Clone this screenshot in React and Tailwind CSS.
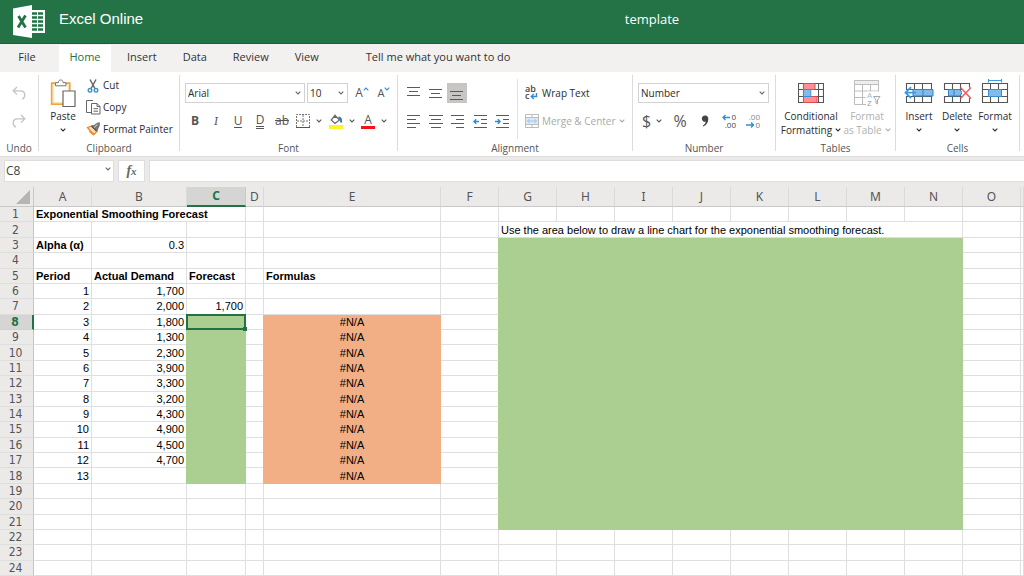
import React, { useState } from "react";

const columns = [
  { name: "A", width: "w-[58px]" },
  { name: "B", width: "w-[95px]" },
  { name: "C", width: "w-[59px]" },
  { name: "D", width: "w-[18px]" },
  { name: "E", width: "w-[177px]" },
  { name: "F", width: "w-[58px]" },
  { name: "G", width: "w-[58px]" },
  { name: "H", width: "w-[58px]" },
  { name: "I", width: "w-[58px]" },
  { name: "J", width: "w-[58px]" },
  { name: "K", width: "w-[58px]" },
  { name: "L", width: "w-[58px]" },
  { name: "M", width: "w-[58px]" },
  { name: "N", width: "w-[58px]" },
  { name: "O", width: "w-[58px]" },
  { name: "", width: "" },
];

const demand = [
  "1,700",
  "2,000",
  "1,800",
  "1,300",
  "2,300",
  "3,900",
  "3,300",
  "3,200",
  "4,300",
  "4,900",
  "4,500",
  "4,700",
  "",
];

// every cell that is not plain and empty
const cells = {
  A1: { text: "Exponential Smoothing Forecast", bold: true, colSpan: 3 },
  G2: {
    text: "Use the area below to draw a line chart for the exponential smoothing forecast.",
    colSpan: 8,
  },
  A3: { text: "Alpha (α)", bold: true },
  B3: { text: "0.3", align: "right" },
  G3: { fill: "green", colSpan: 8, rowSpan: 19 },
  A5: { text: "Period", bold: true },
  B5: { text: "Actual Demand", bold: true },
  C5: { text: "Forecast", bold: true },
  E5: { text: "Formulas", bold: true },
  C7: { text: "1,700", align: "right" },
};
demand.forEach((value, i) => {
  cells["A" + (i + 6)] = { text: String(i + 1), align: "right" };
  cells["B" + (i + 6)] = { text: value, align: "right" };
});
for (let row = 8; row <= 18; row++) {
  cells["C" + row] = { fill: "green" };
  cells["E" + row] = { text: "#N/A", align: "center", fill: "orange" };
}
for (let row = 3; row <= 21; row++) {
  cells["F" + row] = { greenEdge: true };
}

const fills = {
  green: "bg-[#abcf91] border-[#abcf91] shadow-[-1px_0_0_#abcf91]",
  orange: "bg-[#f2af86] border-[#f2af86] shadow-[-1px_0_0_#f2af86]",
};

const aligns = {
  right: "text-right",
  center: "text-center",
};

// cells swallowed by a colSpan or rowSpan, col counts from 0
const isCovered = (col, row) => {
  if (row === 1) return col === 1 || col === 2;
  if (row === 2 || row === 3) return col > 6 && col < 14;
  return row > 3 && row < 22 && col > 5 && col < 14;
};

const Chevron = ({ className = "" }) => (
  <svg
    viewBox="0 0 6 4"
    className={`w-[6px] h-[4px] shrink-0 ${className}`}
    fill="none"
    stroke="currentColor"
    strokeWidth="1.1"
  >
    <path d="M0.7 0.7 L3 2.9 L5.3 0.7" />
  </svg>
);

const ExcelLogo = () => (
  <svg viewBox="0 0 34 34" className="w-[34px] h-[34px] shrink-0">
    <path d="M18 5h15v23H18z" fill="#fff" />
    <path
      d="M20 8.5h5M26 8.5h5M20 12.5h5M26 12.5h5M20 16.5h5M26 16.5h5M20 20.5h5M26 20.5h5M20 24.5h5M26 24.5h5"
      stroke="#217346"
      strokeWidth="2.4"
    />
    <path d="M1 3.5 20 0v33L1 30z" fill="#fff" />
    <path d="M6.5 11l7 11.5M13.5 10.5L6 22.5" stroke="#217346" strokeWidth="2.8" />
  </svg>
);

const UndoIcon = ({ flip }) => (
  <svg
    viewBox="0 0 14 14"
    className={`w-[14px] h-[14px] ${flip ? "-scale-x-100" : ""}`}
    fill="none"
    stroke="#c3c3c3"
    strokeWidth="1.3"
  >
    <path d="M5 1 1.2 4.8 5 8.6M1.2 4.8H8.5C11.5 4.8 12.8 7 12.8 9c0 2-1 3.4-2.6 4.2" />
  </svg>
);

const PasteIcon = () => (
  <svg viewBox="0 0 26 28" className="w-[26px] h-[28px]" fill="none">
    <path d="M1.7 4.2h18v21h-18z" fill="#fff" stroke="#f0a33f" strokeWidth="1.8" />
    <path d="M3.2 5.7h15v18h-15z" stroke="#fbdca0" />
    <path
      d="M5.5 6.8V3.7h2.8C8.3 1.8 9.3 1 10.7 1s2.4.8 2.4 2.7H16v3.1z"
      fill="#fff"
      stroke="#777"
    />
    <path d="M13 12h12v15.5H13z" fill="#fff" stroke="#666" strokeWidth="1.2" />
  </svg>
);

const CutIcon = () => (
  <svg viewBox="0 0 14 14" className="w-[14px] h-[14px]" fill="none">
    <path d="M4 0.5 9.2 10M10 0.5 4.8 10" stroke="#666" strokeWidth="1.5" />
    <circle cx="4" cy="11.3" r="1.8" stroke="#3b93d0" strokeWidth="1.4" />
    <circle cx="10" cy="11.3" r="1.8" stroke="#3b93d0" strokeWidth="1.4" />
  </svg>
);

const CopyIcon = () => (
  <svg viewBox="0 0 15 15" className="w-[15px] h-[15px]" fill="none" stroke="#666">
    <path d="M5 12.5H.5V.5h6.5" />
    <path d="M5.5 3.5h5.5l3 3v7.5H5.5zM11 3.5v3h3" fill="#fff" />
    <path d="M7.5 8.7h4.5M7.5 11.2h4.5" />
  </svg>
);

const PainterIcon = () => (
  <svg viewBox="0 0 15 14" className="w-[15px] h-[14px]" fill="none">
    <path d="M1.5 5.5 7.5 12.8l4-3.8L6 4z" fill="#fbe0b8" stroke="#ed8733" strokeWidth="1.3" />
    <path d="M3.5 9 7.5 12.3" stroke="#ed8733" strokeWidth="1.8" />
    <path d="M5 3.5 8 3l3.5-2.5h2.5l-.2 3L11.5 8.5 10 9z" fill="#777" />
    <path d="M5.5 4 10.5 9" stroke="#555" strokeWidth="1.4" />
    <path d="M8 5.5 11.5 2.5" stroke="#ddd" />
  </svg>
);

// rows of a paragraph, each given as [x1, x2, y]
const LinesIcon = ({ lines, arrow }) => (
  <svg viewBox="0 0 14 14" className="w-[14px] h-[14px]" fill="none">
    {lines.map(([x1, x2, y], i) => (
      <path key={i} d={`M${x1} ${y}.5H${x2}`} stroke="#5a5a5a" />
    ))}
    {arrow === "left" && (
      <path d="M6 7.5H1M3.2 5.3 1 7.5l2.2 2.2" stroke="#2b8fd6" strokeWidth="1.5" />
    )}
    {arrow === "right" && (
      <path d="M0 7.5H5M2.8 5.3 5 7.5 2.8 9.7" stroke="#2b8fd6" strokeWidth="1.5" />
    )}
  </svg>
);

const BordersIcon = () => (
  <svg viewBox="0 0 14 14" className="w-[14px] h-[14px]" fill="none" stroke="#777">
    <path d="M.5 13V.5H13.5V13M7 1v12M1 7h12" strokeDasharray="2 1" />
    <path d="M0 13.5H14" stroke="#555" />
  </svg>
);

const FillIcon = () => (
  <svg viewBox="0 0 14 15" className="w-[14px] h-[15px]" fill="none">
    <path d="M6 1.5 10.5 6 6 9.5 2.2 6zM6 4V0.5" stroke="#666" strokeWidth="1.2" />
    <path d="M9.5 3.5c2 0 3 1.5 2.5 5" stroke="#2b6fb0" strokeWidth="1.8" />
    <path d="M0 11h14v4H0z" fill="#fff22d" />
  </svg>
);

const WrapIcon = () => (
  <svg viewBox="0 0 13 18" className="w-[13px] h-[18px]" fill="none" fontFamily="Open Sans, sans-serif">
    <text x="0" y="8" fontSize="9" fill="#444" fontWeight="600">
      ab
    </text>
    <text x="0" y="15" fontSize="9" fill="#444" fontWeight="600">
      c
    </text>
    <path d="M11.5 9v3.5H6.5M8.8 10 6.3 12.5l2.5 2.5" stroke="#2b8fd6" strokeWidth="1.4" />
  </svg>
);

const MergeIcon = () => (
  <svg viewBox="0 0 14 14" className="w-[14px] h-[14px]" fill="none">
    <path d="M.5 .5h13v13H.5z" stroke="#bbb" />
    <path d="M1 3.5h12M1 10.5h12M7 1v2.5M7 10.5V13" stroke="#bbb" />
    <path d="M1 4h12v6H1z" fill="#dcebf8" />
    <path d="M2.5 7h9M4.5 5 2.5 7l2 2M9.5 5l2 2-2 2" stroke="#9cc4e8" />
  </svg>
);

const DecimalIcon = ({ fewer }) => (
  <svg viewBox="0 0 15 20" className="w-[15px] h-[20px]" fill="none" fontFamily="Open Sans, sans-serif">
    <text x="14" y="9" textAnchor="end" fontSize="8" fill={fewer ? "#888" : "#444"}>
      {fewer ? ".00" : "0"}
    </text>
    <text x="14" y="17" textAnchor="end" fontSize="8" fill={fewer ? "#777" : "#444"}>
      {fewer ? "0" : ".00"}
    </text>
    {fewer ? (
      <path d="M0 14h7.5M5 11.5 7.5 14 5 16.5" stroke="#2b8fd6" strokeWidth="1.3" />
    ) : (
      <path d="M8 6.5H1M3.5 4 1 6.5l2.5 2.5" stroke="#2b8fd6" strokeWidth="1.3" />
    )}
  </svg>
);

const ConditionalIcon = () => (
  <svg viewBox="0 0 26 22" className="w-[26px] h-[22px]" fill="none">
    <path d="M.5 1.5h25v19H.5zM.5 7.5h25M.5 14.5h25M5.5 1.5v19M20.5 1.5v19" stroke="#555" strokeWidth="1.1" />
    <path d="M5.5 1.5H17v6H5.5zM5.5 14.5H19v6H5.5z" fill="#ff8f96" stroke="#e0484d" />
    <path d="M5.5 7.5h7.5v7H5.5z" fill="#80bbec" stroke="#3b8fd0" />
    <path d="M13.5 8h6.5v6h-6.5z" fill="#fff" />
  </svg>
);

const FormatTableIcon = () => (
  <svg viewBox="0 0 28 28" className="w-[28px] h-[28px]" fill="none" stroke="#bdbdbd">
    <path d="M1.5 1.5h24v4h-24z" fill="#eee" />
    <path d="M13 25.5H1.5v-20h24V15M1.5 12h24M1.5 18.5h11M9.5 5.5v20M17.5 5.5V13" />
    <path d="M14 12.5h13v15H14z" fill="#fff" stroke="none" />
    <text x="14" y="19" fontSize="8" fill="#8cc0ea" stroke="none" fontFamily="Open Sans, sans-serif">
      A
    </text>
    <text x="14" y="27" fontSize="8" fill="#999" stroke="none" fontFamily="Open Sans, sans-serif">
      Z
    </text>
    <path d="M20.5 17.5H27l-2.5 3.5v4l-1.5-1v-3z" stroke="#aaa" />
  </svg>
);

const CellsGrid = () => (
  <path
    d="M2.5 1.5h25v19h-25zM2.5 7.5h25M2.5 14.5h25M10.5 1.5v19M18.5 1.5v19"
    stroke="#555"
    strokeWidth="1.1"
  />
);

const InsertIcon = () => (
  <svg viewBox="0 0 30 28" className="w-[30px] h-[28px]" fill="none">
    <g transform="translate(0 3)">
      <CellsGrid />
      <path d="M9 7.5h20v6.5H9zM19 7.5v6.5" fill="#80bbec" stroke="#2b85c8" />
      <path d="M1 8h7v6H1z" fill="#fff" />
      <path d="M12 10.7H1.5M7 5.2 1.5 10.7 7 16.2" stroke="#3b9ae0" strokeWidth="1.8" />
    </g>
  </svg>
);

const DeleteIcon = () => (
  <svg viewBox="0 0 30 28" className="w-[30px] h-[28px]" fill="none">
    <g transform="translate(0 3)">
      <CellsGrid />
      <path d="M2 8h4v6H2z" fill="#fff" />
      <path d="M6.5 7.5H18l2 3.2-2 3.3H6.5zM12 7.5v6.5" fill="#80bbec" stroke="#2b85c8" />
      <path d="M20 5.5h9v10.5h-9z" fill="#fff" />
      <path d="M18.5 5.5 29 16.5M29 5.5 18.5 16.5" stroke="#ee5d62" strokeWidth="1.5" />
    </g>
  </svg>
);

const FormatIcon = () => (
  <svg viewBox="0 0 30 28" className="w-[30px] h-[28px]" fill="none">
    <path d="M8 1.5h14M8.5 0v3.5M21.5 0v3.5" stroke="#3b9ae0" strokeWidth="1.2" />
    <g transform="translate(0 3)">
      <CellsGrid />
      <path d="M8.5 7.5h13v7h-13z" fill="#80bbec" stroke="#3b8fd0" />
    </g>
  </svg>
);

const IconButton = ({ label, className = "w-[22px]", children }) => (
  <button
    type="button"
    aria-label={label}
    className={`flex h-[20px] items-center justify-center text-[#555] ${className}`}
  >
    {children}
  </button>
);

const BigButton = ({ icon, label, disabled, className = "w-[38px]" }) => (
  <button
    type="button"
    disabled={disabled}
    className={`flex flex-col items-center whitespace-nowrap leading-[14px] ${
      disabled ? "text-[#b0b0b0]" : "text-[#2b2b2b]"
    } ${className}`}
  >
    <span className="mb-[2px] flex h-[28px] items-center">{icon}</span>
    {label}
  </button>
);

const Group = ({ label, className, children }) => (
  <section
    aria-label={label}
    className={`flex shrink-0 flex-col pt-[7px] ${className}`}
  >
    <div className="flex h-[62px]">{children}</div>
    <div className="text-center leading-[14px] text-[#555]">{label}</div>
  </section>
);

const Divider = () => <div className="mt-[3px] h-[76px] w-px shrink-0 bg-[#dcdcdc]" />;

const Select = ({ label, options, className }) => (
  <span className={`relative ${className}`}>
    <select
      aria-label={label}
      className="h-[20px] w-full appearance-none border border-[#d2d2d2] bg-white pl-[2px] text-[#2b2b2b] outline-none"
    >
      {options.map((option) => (
        <option key={option}>{option}</option>
      ))}
    </select>
    <Chevron className="pointer-events-none absolute right-[4px] top-[8px] text-[#666]" />
  </span>
);

const Ribbon = () => (
  <div className="flex h-[84px] bg-white text-[10px] text-[#2b2b2b]">
    <Group label="Undo" className="w-[38px]">
      <div className="flex flex-1 flex-col items-center gap-[8px] pt-[4px]">
        <IconButton label="Undo">
          <UndoIcon />
        </IconButton>
        <IconButton label="Redo">
          <UndoIcon flip />
        </IconButton>
      </div>
    </Group>
    <Divider />
    <Group label="Clipboard" className="w-[140px]">
      <BigButton
        icon={<PasteIcon />}
        className="ml-[6px] w-[36px]"
        label={
          <>
            Paste
            <Chevron className="mt-[5px]" />
          </>
        }
      />
      <div className="ml-[5px] flex flex-col">
        <button type="button" className="flex h-[21px] items-center gap-[3px] pb-[8px]">
          <CutIcon />
          Cut
        </button>
        <button type="button" className="flex h-[21px] items-center gap-[2px] pb-[6px]">
          <CopyIcon />
          Copy
        </button>
        <button type="button" className="flex h-[21px] items-center gap-[2px] whitespace-nowrap pb-[4px]">
          <PainterIcon />
          Format Painter
        </button>
      </div>
    </Group>
    <Divider />
    <Group label="Font" className="w-[217px]">
      <div className="flex flex-col pl-[5px]">
        <div className="flex h-[28px] items-center">
          <Select label="Font name" options={["Arial", "Calibri"]} className="w-[120px]" />
          <Select label="Font size" options={["10", "11", "12"]} className="ml-[2px] w-[41px]" />
          <IconButton label="Grow font" className="ml-[3px] w-[22px]">
            <span className="text-[12px]">A</span>
            <Chevron className="mb-[8px] -scale-y-100 text-[#2b8fd6]" />
          </IconButton>
          <IconButton label="Shrink font">
            <span className="text-[11px]">A</span>
            <Chevron className="mb-[8px] text-[#2b8fd6]" />
          </IconButton>
        </div>
        <div className="flex h-[28px] items-center text-[12px]">
          <IconButton label="Bold" className="w-[20px] font-bold">
            B
          </IconButton>
          <IconButton label="Italic">
            <i className="font-serif">I</i>
          </IconButton>
          <IconButton label="Underline">
            <span className="border-b border-[#555] leading-[13px]">U</span>
          </IconButton>
          <IconButton label="Double underline">
            <span className="border-b-3 border-double border-[#555] leading-[13px]">D</span>
          </IconButton>
          <IconButton label="Strikethrough">
            <span className="line-through">ab</span>
          </IconButton>
          <IconButton label="Borders" className="w-[32px] gap-[6px]">
            <BordersIcon />
            <Chevron />
          </IconButton>
          <IconButton label="Fill color" className="w-[34px] gap-[6px]">
            <FillIcon />
            <Chevron />
          </IconButton>
          <IconButton label="Font color" className="w-[30px] gap-[6px]">
            <span className="w-[14px] border-b-3 border-[#f8101a] leading-[12px]">A</span>
            <Chevron />
          </IconButton>
        </div>
      </div>
    </Group>
    <Divider />
    <Group label="Alignment" className="w-[234px]">
      <div className="flex flex-col pl-[5px]">
        <div className="flex h-[28px] items-center">
          <IconButton label="Top align">
            <LinesIcon lines={[[0, 13, 1], [2, 11, 5], [0, 13, 9]]} />
          </IconButton>
          <IconButton label="Middle align">
            <LinesIcon lines={[[0, 13, 3], [2, 11, 7], [0, 13, 11]]} />
          </IconButton>
          <IconButton label="Bottom align" className="w-[20px] bg-[#c8c6c4]">
            <LinesIcon lines={[[0, 13, 5], [2, 11, 9], [0, 13, 13]]} />
          </IconButton>
        </div>
        <div className="flex h-[28px] items-center">
          <IconButton label="Align left">
            <LinesIcon lines={[[0, 13, 1], [0, 9, 5], [0, 13, 9], [0, 9, 13]]} />
          </IconButton>
          <IconButton label="Center">
            <LinesIcon lines={[[0, 14, 1], [2, 12, 5], [0, 14, 9], [2, 12, 13]]} />
          </IconButton>
          <IconButton label="Align right">
            <LinesIcon lines={[[0, 13, 1], [5, 13, 5], [0, 13, 9], [5, 13, 13]]} />
          </IconButton>
          <IconButton label="Decrease indent">
            <LinesIcon arrow="left" lines={[[1, 14, 1], [8, 14, 5], [8, 14, 9], [1, 14, 13]]} />
          </IconButton>
          <IconButton label="Increase indent">
            <LinesIcon arrow="right" lines={[[1, 14, 1], [8, 14, 5], [8, 14, 9], [1, 14, 13]]} />
          </IconButton>
        </div>
      </div>
      <div className="ml-[4px] h-[60px] w-px bg-[#e2e2e2]" />
      <div className="flex flex-col pl-[7px]">
        <button type="button" className="flex h-[28px] items-center gap-[4px]">
          <WrapIcon />
          Wrap Text
        </button>
        <button
          type="button"
          disabled
          className="flex h-[28px] items-center gap-[3px] whitespace-nowrap text-[#a9a9a9]"
        >
          <MergeIcon />
          Merge &amp; Center
          <Chevron />
        </button>
      </div>
    </Group>
    <Divider />
    <Group label="Number" className="w-[142px]">
      <div className="flex flex-col pl-[5px]">
        <div className="flex h-[28px] items-center">
          <Select label="Number format" options={["Number", "General"]} className="w-[131px]" />
        </div>
        <div className="flex h-[28px] items-center text-[16px]">
          <IconButton label="Currency" className="w-[28px] gap-[5px]">
            $
            <Chevron />
          </IconButton>
          <IconButton label="Percent" className="w-[28px]">
            %
          </IconButton>
          <IconButton label="Comma style">
            <svg viewBox="0 0 8 12" className="w-[8px] h-[12px]" fill="#444">
              <path d="M4 .5A3 3 0 0 1 7.3 4c0 3.5-2 6-5 7.5L1.8 10.8C3.6 9.6 4.6 8.3 4.7 6.6A3.1 3.1 0 1 1 4 .5z" />
            </svg>
          </IconButton>
          <IconButton label="Increase decimal" className="w-[26px]">
            <DecimalIcon />
          </IconButton>
          <IconButton label="Decrease decimal">
            <DecimalIcon fewer />
          </IconButton>
        </div>
      </div>
    </Group>
    <Divider />
    <Group label="Tables" className="w-[119px]">
      <BigButton
        icon={<ConditionalIcon />}
        className="ml-[5px] w-[60px]"
        label={
          <>
            Conditional
            <span className="flex items-center gap-[3px]">
              Formatting
              <Chevron />
            </span>
          </>
        }
      />
      <BigButton
        disabled
        icon={<FormatTableIcon />}
        className="ml-[2px] w-[48px]"
        label={
          <>
            Format
            <span className="flex items-center gap-[3px]">
              as Table
              <Chevron />
            </span>
          </>
        }
      />
    </Group>
    <Divider />
    <Group label="Cells" className="w-[123px]">
      <BigButton
        icon={<InsertIcon />}
        className="ml-[4px] w-[38px]"
        label={
          <>
            Insert
            <Chevron className="mt-[5px]" />
          </>
        }
      />
      <BigButton
        icon={<DeleteIcon />}
        label={
          <>
            Delete
            <Chevron className="mt-[5px]" />
          </>
        }
      />
      <BigButton
        icon={<FormatIcon />}
        label={
          <>
            Format
            <Chevron className="mt-[5px]" />
          </>
        }
      />
    </Group>
    <Divider />
  </div>
);

const Cell = ({ cell, selected, onClick }) => (
  <td
    colSpan={cell.colSpan}
    rowSpan={cell.rowSpan}
    onClick={onClick}
    className={`relative whitespace-nowrap border-r border-b px-[2px] ${
      cell.fill ? fills[cell.fill] : "border-[#dfdfdf]"
    } ${cell.greenEdge ? "border-r-[#abcf91]" : ""} ${
      aligns[cell.align] || ""
    } ${cell.bold ? "font-bold" : ""}`}
  >
    {cell.text}
    {selected && (
      <span className="absolute -left-px -top-px -right-px -bottom-px z-10 border-2 border-[#217346]">
        <span className="absolute -right-[3px] -bottom-[3px] h-[4px] w-[4px] bg-[#217346]" />
      </span>
    )}
  </td>
);

const Sheet = ({ selected, setSelected }) => {
  const rows = Array.from({ length: 24 }, (_, i) => i + 1);

  return (
    <table className="h-[389px] w-full table-fixed border-separate border-spacing-0 font-['Liberation_Sans',Arial,sans-serif] text-[11px] leading-[14px] text-black">
      <colgroup>
        <col className="w-[34px]" />
        {columns.map((col, i) => (
          <col key={i} className={col.width} />
        ))}
      </colgroup>
      <thead className="font-['Noto_Sans',sans-serif] text-[12px] text-[#555]">
        <tr className="h-[20px]">
          <th className="border-r border-b border-[#c9c9c9] bg-[#ebeae9] p-0">
            <svg viewBox="0 0 14 14" className="ml-auto mr-[3px] w-[14px] h-[14px]">
              <path d="M14 0v14H0z" fill="#b5b5b5" />
            </svg>
          </th>
          {columns.map((col, i) => (
            <th
              key={i}
              scope="col"
              className={`p-0 leading-[16px] ${
                selected.startsWith(col.name) && col.name
                  ? "border-r border-b-2 border-r-[#c9c9c9] border-b-[#217346] bg-[#d5d5d4] font-bold text-[#217346]"
                  : "border-r border-b border-r-[#dadada] border-b-[#c9c9c9] bg-[#ebeae9] font-normal"
              }`}
            >
              {col.name}
            </th>
          ))}
        </tr>
      </thead>
      <tbody>
        {rows.map((row) => (
          <tr key={row}>
            <th
              scope="row"
              className={`p-0 pr-[2px] font-['DejaVu_Sans_Condensed','DejaVu_Sans',sans-serif] text-[12px] leading-[14px] ${
                selected.slice(1) === String(row)
                  ? "border-r-2 border-b border-r-[#217346] border-b-[#d0d0d0] bg-[#d5d5d4] font-bold text-[#217346]"
                  : "border-r border-b border-r-[#c4c4c4] border-b-[#dedede] bg-[#ebeae9] font-normal text-[#555]"
              }`}
            >
              {row}
            </th>
            {columns.map((col, i) =>
              isCovered(i, row) ? null : (
                <Cell
                  key={i}
                  cell={cells[col.name + row] || {}}
                  selected={selected === col.name + row}
                  onClick={() => setSelected(col.name + row)}
                />
              )
            )}
          </tr>
        ))}
      </tbody>
    </table>
  );
};

const tabs = ["Insert", "Data", "Review", "View"];

const App = () => {
  const [selected, setSelected] = useState("C8");
  const [formula, setFormula] = useState("");

  return (
    <div className="min-h-screen overflow-hidden bg-white font-['Open_Sans',sans-serif]">
      <header className="flex h-[44px] items-center border-b border-[#1c5f39] bg-[#247347] text-white">
        <div className="flex w-[280px] shrink-0 items-center gap-[13px] pl-[12px]">
          <ExcelLogo />
          <span className="pb-[4px] font-['Liberation_Sans',Arial,sans-serif] text-[15px]">
            Excel Online
          </span>
        </div>
        <h1 className="flex-1 pb-[4px] text-center text-[13px] font-medium">template</h1>
      </header>

      <nav className="flex h-[28px] items-center bg-[#f2f1f0] pt-px text-[11px] text-[#333]">
        <button type="button" className="w-[59px] pr-[5px] pb-[3px]">
          File
        </button>
        <button type="button" className="h-full w-[52px] bg-white pb-[3px] font-medium text-[#217346]">
          Home
        </button>
        <div className="flex pl-[3px] pb-[3px]">
          {tabs.map((tab) => (
            <button key={tab} type="button" className="px-[13px]">
              {tab}
            </button>
          ))}
        </div>
        <button type="button" className="ml-[21px] px-[13px] pb-[3px]">
          Tell me what you want to do
        </button>
      </nav>

      <Ribbon />

      <div className="flex h-[31px] gap-[4px] border-t border-[#dcdcdc] bg-[#ebeae9] pt-[3px] pl-[4px] text-[12px] text-[#444]">
        <div className="relative h-[22px] w-[110px]">
          <input
            aria-label="Name box"
            value={selected}
            onChange={(e) => setSelected(e.target.value)}
            className="h-full w-full border border-[#dedede] bg-white pl-px pb-[2px] outline-none"
          />
          <Chevron className="absolute right-[3px] top-[7px] text-[#666]" />
        </div>
        <button
          type="button"
          aria-label="Insert function"
          className="h-[22px] w-[27px] border border-[#dedede] bg-white font-['Liberation_Serif',serif] text-[14px] leading-[18px] font-bold italic text-[#666]"
        >
          f<span className="text-[11px]">x</span>
        </button>
        <input
          aria-label="Formula"
          value={formula}
          onChange={(e) => setFormula(e.target.value)}
          className="h-[22px] flex-1 border border-r-0 border-[#dedede] bg-white px-[4px] outline-none"
        />
      </div>

      <Sheet selected={selected} setSelected={setSelected} />
    </div>
  );
};

export default App;
